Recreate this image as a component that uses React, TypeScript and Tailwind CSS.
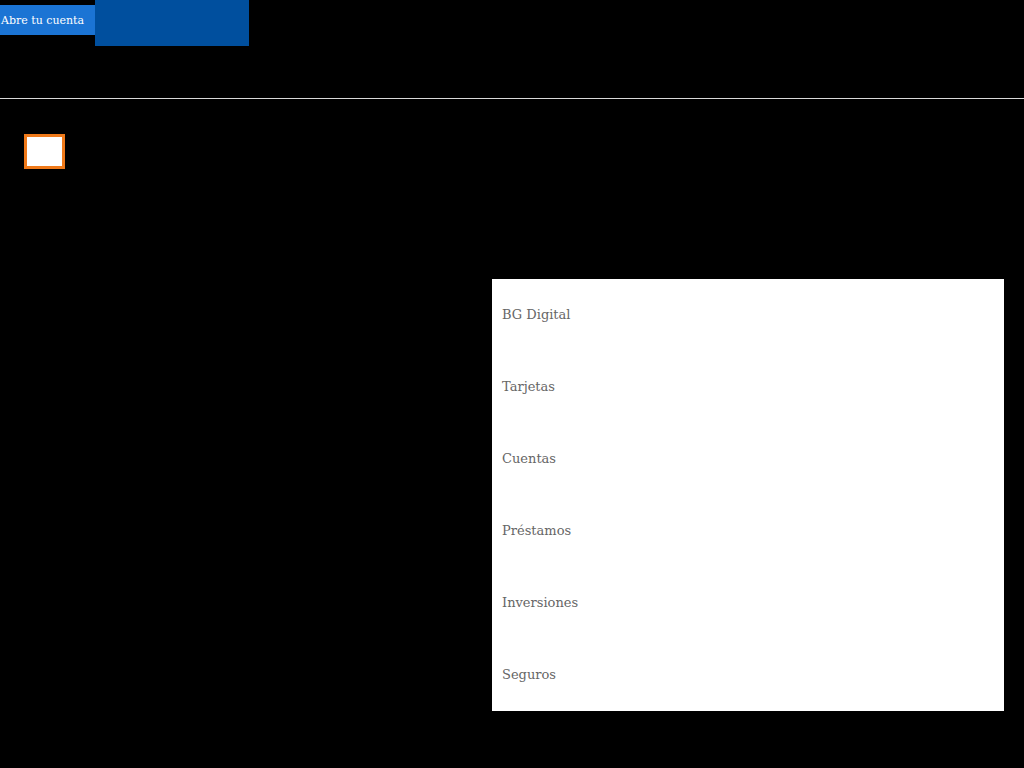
import React from "react";

const items = ["BG Digital", "Tarjetas", "Cuentas", "Préstamos", "Inversiones", "Seguros"];

export default function App() {
  return (
    <div className="min-h-[768px] w-full bg-black font-['DejaVu_Serif',serif]">
      <header className="flex h-[99px] items-start border-b border-[#d9d9d9]">
        <a
          href="#"
          className="mt-[5px] flex h-[30px] w-[95px] items-center bg-[#1b74d4] pl-[1px] pt-[2px] text-[11px] text-white"
        >
          Abre tu cuenta
        </a>
        <div className="h-[46px] w-[154px] bg-[#004f9e]" />
      </header>
      <div className="pl-[24px] pt-[35px]">
        <button className="block h-[35px] w-[41px] border-[3px] border-[#f07a1a] bg-white" />
      </div>
      <div className="flex justify-end pr-[20px] pt-[110px]">
        <ul className="w-[512px] bg-white">
          {items.map((it) => (
            <li key={it} className="flex h-[72px] items-center pl-[10px] text-[13px] text-[#666666]">
              {it}
            </li>
          ))}
        </ul>
      </div>
    </div>
  );
}
